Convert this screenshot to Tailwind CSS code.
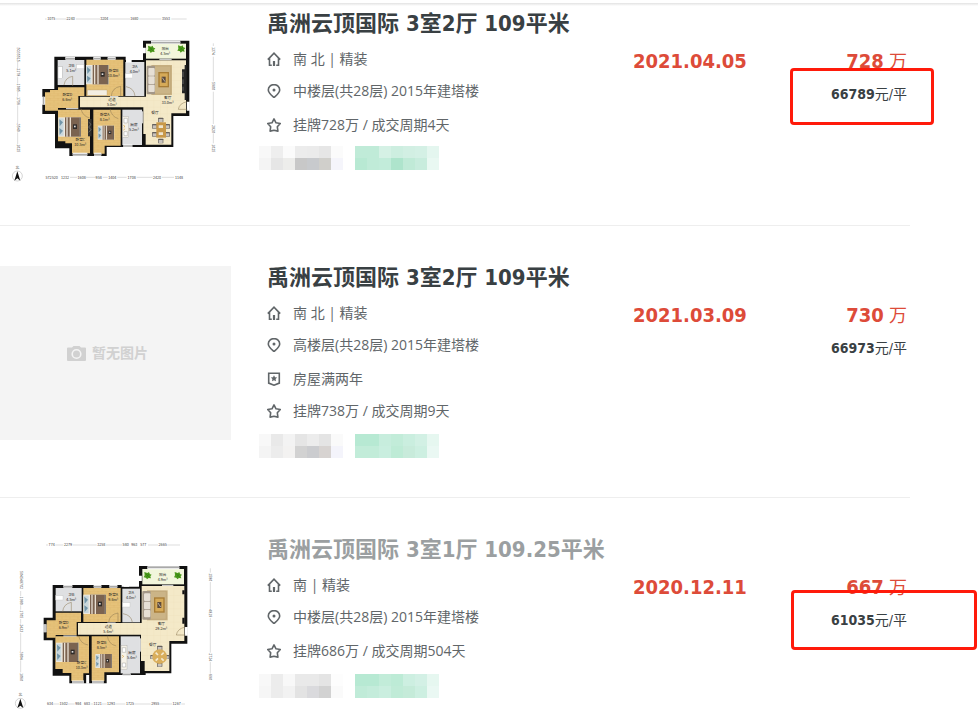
<!DOCTYPE html>
<html lang="zh-CN">
<head>
    <meta charset="UTF-8">
    <meta name="viewport" content="width=device-width, initial-scale=1.0">
    <title>成交房源</title>
    <script src="https://cdn.jsdelivr.net/npm/@tailwindcss/browser@4"></script>
</head>
<body class="bg-white font-['Open_Sans','Noto_Sans_CJK_SC',sans-serif] text-[#616669]">
    <!-- shared drawings -->
    <svg class="absolute size-0" aria-hidden="true">
        <defs>
            <pattern id="wood" width="24" height="14" patternUnits="userSpaceOnUse">
                <rect width="24" height="14" fill="#e6c27a" />
                <path d="M0 .5H24M0 7.5H24M6 0V7M18 7V14" stroke="#d9b063" stroke-width="1" />
            </pattern>
            <pattern id="tile" width="20" height="20" patternUnits="userSpaceOnUse">
                <rect width="20" height="20" fill="#f4e9c8" />
                <path d="M0 .5H20M.5 0V20" stroke="#ecdfb8" stroke-width="1" />
            </pattern>
            <symbol id="bed" viewBox="0 0 68 58" overflow="visible">
                <rect width="68" height="58" fill="#efe9df" />
                <rect x="1" y="3" width="15" height="52" fill="#c9d7dc" />
                <path d="M3 6l11 9-10 12zM3 32l11 8-10 12z" fill="#7295a8" />
                <rect x="20" width="44" height="58" fill="#7b6350" />
                <path d="M26 0V58M36 0V58" stroke="#e8dfd2" stroke-width="4" />
                <rect x="44" y="21" width="12" height="14" fill="#2f2b29" />
                <rect x="47" y="25" width="5" height="5" fill="#ddd" />
                <rect x="64" width="3" height="58" fill="#473c35" />
            </symbol>
            <symbol id="plant" viewBox="0 0 24 24" overflow="visible">
                <path d="M2 1l9 3 5-3 2 6 6 2-4 5 2 6-7-1-5 4-3-5-7-1 3-6z" fill="#4c9a1c" />
                <path d="M6 6l12 11M17 6L7 17" stroke="#2f7a10" stroke-width="2" />
            </symbol>
            <symbol id="lounge" viewBox="0 0 76 90" overflow="visible">
                <rect x="14" y="0" width="62" height="90" fill="#cbb487" />
                <path d="M18 3H72V87H18z" fill="none" stroke="#bda574" stroke-width="2" />
                <rect x="0" y="2" width="25" height="86" rx="3" fill="#a39788" />
                <rect x="5" y="9" width="19" height="23" rx="3" fill="#e6dfd5" />
                <rect x="5" y="34" width="19" height="23" rx="3" fill="#e6dfd5" />
                <rect x="5" y="59" width="19" height="22" rx="3" fill="#e6dfd5" />
                <rect x="35" y="21" width="32" height="46" fill="#a77c36" />
                <rect x="39" y="25" width="24" height="38" fill="#d6aa58" />
                <rect x="45" y="35" width="12" height="18" fill="#5d4a3a" />
                <path d="M47 38l8 12" stroke="#ddd" stroke-width="2" />
            </symbol>
            <symbol id="chair" viewBox="0 0 16 14" overflow="visible">
                <rect width="16" height="14" rx="2" fill="#65605c" />
                <rect x="2" y="4" width="12" height="9" fill="#c8c3bd" />
            </symbol>
            <symbol id="compass" viewBox="0 0 32 32" overflow="visible">
                <circle cx="16" cy="16" r="15" fill="none" stroke="#aaa" stroke-width="1.5" />
                <path d="M16 2l9 28-9-7-9 7z" fill="#111" />
                <text x="16" y="-5" font-size="11" text-anchor="middle" fill="#444">北</text>
            </symbol>
        </defs>
    </svg>

    <header class="h-3 pt-[3px]">
        <div class="h-[3px] bg-linear-to-b from-[#e2e2e2] to-white"></div>
    </header>

    <main id="list"></main>

    <script>
        const pictures = {
            // 109平米 plan
            planA : `
            <svg viewBox="0 36 693 522" class="block w-full" role="img" aria-label="户型图" font-family="Noto Sans CJK SC, sans-serif">
                <path d="M163 170H377V180H429V122H568V348H520V441H320V468H208V445H165V342H127V267H163z" fill="#111"/>
                <rect x="173" y="180" width="80" height="75" fill="#dfe0e2"/>
                <rect x="259" y="179" width="111" height="109" fill="url(#wood)"/>
                <rect x="376" y="186" width="57" height="102" fill="#dfe0e2"/>
                <rect x="438" y="131" width="120" height="45" fill="#f2f6dc"/>
                <path d="M438 181H558V340H514V434H430V322H240V290H438z" fill="url(#tile)"/>
                <path d="M174 262H253V288H235V324H174V332H135V277H150V270H174z" fill="url(#wood)"/>
                <path d="M174 329H270V460H216V430H196V424H174z" fill="url(#wood)"/>
                <path d="M280 329H362V437H314V461H280z" fill="url(#wood)"/>
                <rect x="367" y="329" width="59" height="106" fill="#dfe0e2"/>
                <path d="M426 402H437V436H426z" fill="#111"/>
                <path d="M196 175H225M280 175H302M323 175H347M378 183H395M453 127H541M131 290V314M433 143V160M218 463H262M282 463H304M370 438H397M565 305V332" stroke="#fff" stroke-width="9"/>
                <path d="M196 175H225M280 175H302M323 175H347M453 127H541M131 290V314M218 463H262M282 463H304M370 438H397" stroke="#a9a9a9" stroke-width="4"/>
                <path d="M478 178H515M428 334V370M198 326H235M330 290H355" stroke="#eee" stroke-width="3"/>
                <path d="M218 258V229Q196 232 192 255M362 288V259Q336 263 334 288M405 288Q402 264 378 260M243 326Q247 348 269 354M330 326Q334 350 355 356M562 305Q538 309 535 328H562" stroke="#8b7650" stroke-width="1.5" fill="none"/>
                <use href="#bed" x="258" y="195" width="68" height="58"/>
                <use href="#bed" x="175" y="352" width="68" height="58"/>
                <use href="#bed" x="283" y="377" width="70" height="42"/>
                <rect x="262" y="270" width="59" height="16" fill="#f3eee2" stroke="#b39b6f"/>
                <rect x="264" y="357" width="11" height="52" fill="#30302e"/>
                <path d="M266 366l7 7-7 8 7 8-7 8" stroke="#ccc" fill="none"/>
                <rect x="174" y="200" width="13" height="36" fill="#fff" stroke="#999"/>
                <rect x="230" y="194" width="22" height="12" fill="#fff" stroke="#bbb"/>
                <rect x="376" y="221" width="22" height="13" fill="#fff" stroke="#bbb"/>
                <rect x="368" y="349" width="18" height="63" fill="#f6f2e8" stroke="#999"/>
                <path d="M372 355h10v14h-10zM372 395h10v12h-10z" fill="#fff" stroke="#777"/>
                <path d="M370 376l5 3-4 4M374 386l-3 5" stroke="#d79b31" stroke-width="2" fill="none"/>
                <use href="#lounge" x="440" y="195" width="76" height="90"/>
                <path d="M546 208H558V280H546zM554 195H560V300H554z" fill="#252525"/>
                <path d="M549 215v16M549 238v14M549 260v12" stroke="#888" stroke-width="2"/>
                <use href="#plant" x="442" y="136" width="24" height="24"/>
                <use href="#plant" x="532" y="135" width="24" height="24"/>
                <use href="#chair" x="474" y="353" width="16" height="14"/>
                <use href="#chair" x="456" y="372" width="16" height="14"/>
                <use href="#chair" x="456" y="396" width="16" height="14"/>
                <use href="#chair" x="494" y="372" width="16" height="14"/>
                <use href="#chair" x="494" y="396" width="16" height="14"/>
                <use href="#chair" x="474" y="416" width="16" height="14"/>
                <rect x="469" y="367" width="29" height="46" fill="#c89849"/>
                <path d="M476 376h13v8h-13zM476 397h13v8h-13z" fill="#eee5cf"/>
                <g font-size="11" text-anchor="middle" fill="#222">
                    <text x="214" y="201">卫B</text><text x="214" y="216">5.1m²</text>
                    <text x="341" y="217">卧室B</text><text x="341" y="232">10.8m²</text>
                    <text x="404" y="203">卫A</text><text x="404" y="218">4.0m²</text>
                    <text x="496" y="150">阳台</text><text x="496" y="165">4.5m²</text>
                    <text x="503" y="296">客厅</text><text x="503" y="311">33.0m²</text>
                    <text x="202" y="289">卧室D</text><text x="202" y="304">6.6m²</text>
                    <text x="336" y="303">过道</text><text x="336" y="318">5.0m²</text>
                    <text x="314" y="349">卧室A</text><text x="314" y="364">8.1m²</text>
                    <text x="241" y="422">卧室C</text><text x="241" y="437">10.5m²</text>
                    <text x="402" y="377">厨房</text><text x="402" y="392">5.2m²</text>
                    <text x="465" y="341">餐厅</text>
                </g>
                <g stroke="#999" stroke-width="1">
                    <path d="M135 57H140M168 57H200M228 57H300M328 57H390M418 57H484M514 57H560M210 532H232M258 532H286M308 532H323M352 532H380M410 532H458M486 532H522"/>
                    <path d="M53 185V204M53 230V250M53 276V290M53 316V370M53 397V432M640 130V138M640 170V244M640 275V372M640 400V430"/>
                </g>
                <g font-size="11" text-anchor="middle" fill="#444">
                    <text x="154" y="61">1075</text><text x="212" y="61">2240</text><text x="313" y="61">3204</text><text x="403" y="61">1680</text><text x="498" y="61">3553</text>
                    <text x="155" y="536">572520</text><text x="195" y="536">1232</text><text x="245" y="536">1608</text><text x="296" y="536">958</text><text x="337" y="536">1404</text><text x="395" y="536">1708</text><text x="471" y="536">2420</text><text x="537" y="536">1148</text>
                    <text transform="translate(50 164) rotate(90)">5035515</text><text transform="translate(50 217) rotate(90)">2178</text><text transform="translate(50 263) rotate(90)">1085</text><text transform="translate(50 303) rotate(90)">1756</text><text transform="translate(50 383) rotate(90)">3540</text><text transform="translate(50 445) rotate(90)">1025</text>
                    <text transform="translate(637 153) rotate(90)">1374</text><text transform="translate(637 258) rotate(90)">5900</text><text transform="translate(637 387) rotate(90)">2820</text><text transform="translate(637 445) rotate(90)">1025</text>
                </g>
                <use href="#compass" x="36" y="512" width="32" height="32"/>
            </svg>`,
            // 109.25平米 plan
            planB : `
            <svg viewBox="0 9 693 522" class="block w-full" role="img" aria-label="户型图" font-family="Noto Sans CJK SC, sans-serif">
                <path d="M158 150H365V155H417V93H562V326H514V415H437V420H320V445H208V422H158V316H131V248H158z" fill="#111"/>
                <rect x="167" y="159" width="78" height="70" fill="#dfe0e2"/>
                <rect x="250" y="159" width="112" height="102" fill="url(#wood)"/>
                <rect x="367" y="161" width="53" height="101" fill="#dfe0e2"/>
                <rect x="427" y="102" width="125" height="46" fill="#f2f6dc"/>
                <path d="M425 153H553V318H508V408H423V299H234V264H425z" fill="url(#tile)"/>
                <path d="M167 233H243V261H230V300H167V308H140V256H167z" fill="url(#wood)"/>
                <path d="M166 304H267V415H250V438H214V414H188V402H166z" fill="url(#wood)"/>
                <path d="M275 304H357V412H313V438H275z" fill="url(#wood)"/>
                <rect x="362" y="304" width="58" height="111" fill="#dfe0e2"/>
                <path d="M422 378H434V412H422zM547 248H554V266H547zM547 166H554V178H547z" fill="#111"/>
                <path d="M190 154H217M281 154H304M328 154H352M371 151H387M442 98H538M135 268V292M421 122V138M216 441H252M276 441H311M368 419H392M559 276V302M263 420V446" stroke="#fff" stroke-width="9"/>
                <path d="M190 154H217M281 154H304M328 154H352M442 98H538M135 268V292M216 441H252M276 441H311M368 419H392" stroke="#a9a9a9" stroke-width="4"/>
                <path d="M486 151H520M421 310V350M190 303H230M322 264H347" stroke="#eee" stroke-width="3"/>
                <path d="M214 230V202Q190 207 188 230M354 262V234Q328 238 326 262M397 262Q394 240 369 236M236 302Q240 325 264 330M322 302Q325 328 349 333M556 276Q532 281 529 300H556" stroke="#8b7650" stroke-width="1.5" fill="none"/>
                <use href="#bed" x="250" y="179" width="68" height="58"/>
                <use href="#bed" x="168" y="323" width="68" height="58"/>
                <use href="#bed" x="276" y="357" width="70" height="42"/>
                <rect x="167" y="182" width="22" height="13" fill="#fff" stroke="#bbb"/>
                <rect x="368" y="203" width="22" height="13" fill="#fff" stroke="#bbb"/>
                <rect x="363" y="331" width="18" height="73" fill="#f6f2e8" stroke="#999"/>
                <path d="M367 338h10v14h-10zM367 384h10v12h-10z" fill="#fff" stroke="#777"/>
                <path d="M366 361l5 3-4 4" stroke="#d79b31" stroke-width="2" fill="none"/>
                <use href="#lounge" x="427" y="166" width="76" height="90"/>
                <use href="#plant" x="431" y="110" width="24" height="24"/>
                <use href="#plant" x="522" y="110" width="24" height="24"/>
                <use href="#chair" x="470" y="332" width="18" height="14"/>
                <use href="#chair" x="451" y="357" width="14" height="18"/>
                <use href="#chair" x="494" y="357" width="14" height="18"/>
                <use href="#chair" x="470" y="382" width="18" height="14"/>
                <circle cx="479" cy="365" r="22" fill="#d9ae5c"/>
                <path d="M467 353l7 7M491 353l-7 7M467 377l7-7M491 377l-7-7" stroke="#f4ead0" stroke-width="5"/>
                <g font-size="11" text-anchor="middle" fill="#222">
                    <text x="214" y="182">卫B</text><text x="214" y="197">4.5m²</text>
                    <text x="340" y="182">卧室A</text><text x="340" y="197">9.6m²</text>
                    <text x="393" y="176">卫A</text><text x="393" y="191">4.0m²</text>
                    <text x="488" y="122">阳台</text><text x="488" y="137">4.9m²</text>
                    <text x="484" y="271">客厅</text><text x="484" y="286">29.2m²</text>
                    <text x="191" y="266">卧室D</text><text x="191" y="281">6.9m²</text>
                    <text x="325" y="278">过道</text><text x="325" y="293">5.4m²</text>
                    <text x="305" y="326">卧室B</text><text x="305" y="341">8.5m²</text>
                    <text x="245" y="388">卧室C</text><text x="245" y="403">10.3m²</text>
                    <text x="396" y="356">厨房</text><text x="396" y="371">5.4m²</text>
                    <text x="458" y="333">餐厅</text>
                </g>
                <g stroke="#999" stroke-width="1">
                    <path d="M138 30H144M166 30H190M218 30H290M318 30H366M444 30H474M502 30H540M160 507H178M204 507H224M272 507H280M306 507H320M346 507H376M404 507H452M480 507H516M544 507H555"/>
                    <path d="M62 168V183M62 211V224M62 252V266M62 294V348M62 376V412M631 100V113M631 141V221M631 249V353M631 381V416"/>
                </g>
                <g font-size="11" text-anchor="middle" fill="#444">
                    <text x="155" y="34">774</text><text x="204" y="34">2279</text><text x="304" y="34">3258</text><text x="377" y="34">580</text><text x="403" y="34">963</text><text x="430" y="34">577</text><text x="488" y="34">2665</text>
                    <text x="150" y="511">634</text><text x="191" y="511">1502</text><text x="235" y="511">984</text><text x="261" y="511">683</text><text x="293" y="511">1121</text><text x="333" y="511">1293</text><text x="390" y="511">1725</text><text x="466" y="511">2955</text><text x="530" y="511">1267</text>
                    <text transform="translate(59 135) rotate(90)">504548702</text><text transform="translate(59 197) rotate(90)">1980</text><text transform="translate(59 238) rotate(90)">1705</text><text transform="translate(59 280) rotate(90)">2433</text><text transform="translate(59 362) rotate(90)">3804</text><text transform="translate(59 426) rotate(90)">1060</text>
                    <text transform="translate(628 127) rotate(90)">1580</text><text transform="translate(628 235) rotate(90)">4819</text><text transform="translate(628 367) rotate(90)">2724</text><text transform="translate(628 426) rotate(90)">690</text>
                </g>
                <use href="#compass" x="45" y="489" width="32" height="32"/>
            </svg>`,
            none : `
            <div class="flex h-[174px] items-center justify-center gap-1.5 bg-[#f4f4f4] pr-4 text-sm font-bold text-[#d1d1d1]">
                <svg viewBox="0 0 19 15" class="h-[15px] w-[19px]"><path d="M1 1.500H5L6.500 0H12.500L14 1.500H18Q19 1.500 19 2.500V14Q19 15 18 15H1Q0 15 0 14V2.500Q0 1.500 1 1.500z" fill="currentColor"/><circle cx="9.500" cy="8" r="4.300" fill="none" stroke="#f4f4f4" stroke-width="1.600"/></svg>
                <span>暂无图片</span>
            </div>`
        }

        const icons = {
            home : `<path d="M.8 7.600L7 1.200l6.200 6.400M2.500 6.300v7h2.300M11.500 6.300v7H9.200"/><path d="M7 9v5" stroke-width="2.200"/>`,
            pin : `<path d="M7 13.600C4.500 11.300 1.300 8.700 1.300 5.900a5.700 5.300 0 0 1 11.400 0c0 2.800-3.200 5.400-5.700 7.700z"/><circle cx="7" cy="6" r="1.500" fill="currentColor" stroke="none"/>`,
            badge : `<path d="M1.700 1.300h10.600v9.800L7 13.200 1.700 11.100z"/><path d="M7 3.200l1 2 2.200.3-1.600 1.600.4 2.200L7 8.300l-2 1 .4-2.200-1.600-1.600 2.200-.3z" fill="currentColor" stroke="none"/>`,
            star : `<path d="M7 .9l2 3.900 4.300.7-3 3.200.6 4.400L7 12.200l-3.900.9.6-4.400-3-3.200L5 4.800z" stroke-linejoin="round"/>`
        }

        const houses = [
            {
                picture : 'planA', title : '禹洲云顶国际 3室2厅 109平米', title_color : 'text-[#394043]',
                info : [['home', '南 北 | 精装'], ['pin', '中楼层(共28层) 2015年建塔楼'], ['star', '挂牌728万 / 成交周期4天']],
                date : '2021.04.05', total : '728', unit : '66789',
                mark : 'top-14 -right-6 left-5 h-[57px]', tags_gap : 'mt-[5px]',
                gray : ['#f8f8f8', '#eeeeee', '#fbfbfb', '#ececec', '#ebebeb', '#e6e6e6', '#fbfbfb', '#f4f4f4', '#e6e6e6', '#ededeb', '#c8c8c8', '#c8cacd', '#d0cfcb', '#f5f5fb'],
                green : ['#c0ebd8', '#c0ebd8', '#d5f1e5', '#cdeee0', '#d2efe3', '#d4f0e5', '#e4f6ef', '#b8e9d3', '#c0ebd8', '#c2ecda', '#aee4cc', '#c0ead7', '#c8ecdd', '#e9f8f2']
            },
            {
                picture : 'none', title : '禹洲云顶国际 3室2厅 109平米', title_color : 'text-[#394043]',
                info : [['home', '南 北 | 精装'], ['pin', '高楼层(共28层) 2015年建塔楼'], ['badge', '房屋满两年'], ['star', '挂牌738万 / 成交周期9天']],
                date : '2021.03.09', total : '730', unit : '66973',
                mark : '', tags_gap : 'mt-[7px]',
                gray : ['#f8f8f8', '#e9e9e9', '#f3f3f3', '#e5e5e5', '#ececec', '#e4e4e4', '#fafafa', '#f4f4f4', '#ececec', '#f3f2f1', '#d2d2d2', '#cbcccf', '#d7d3d1', '#f4f4fb'],
                green : ['#b7e9d3', '#b7e9d3', '#c7eddd', '#c2ecd9', '#caeedf', '#d2f0e4', '#e6f7f0', '#c2ecd9', '#c2ecd9', '#c9eedf', '#beebd6', '#c8ebdb', '#cdefe1', '#eaf8f3']
            },
            {
                picture : 'planB', title : '禹洲云顶国际 3室1厅 109.25平米', title_color : 'text-[#9b9fa1]',
                info : [['home', '南 | 精装'], ['pin', '中楼层(共28层) 2015年建塔楼'], ['star', '挂牌686万 / 成交周期504天']],
                date : '2020.12.11', total : '667', unit : '61035',
                mark : 'top-[52px] -right-[67px] left-[21px] h-[60px]', tags_gap : 'mt-[7px]',
                gray : ['#f8f8f8', '#ececec', '#f8f8f8', '#e9e9e9', '#e9e9e9', '#e4e4e4', '#fdfdfd', '#f6f6f6', '#ececec', '#f2f2f2', '#e3e3e3', '#dadadd', '#d2d2d2', '#fafafa'],
                green : ['#b7e9d3', '#b7e9d3', '#c2ecd9', '#bdebd6', '#cdefe1', '#d3f0e5', '#e6f7f0', '#c0ebd8', '#c4ecdb', '#caeedf', '#c0ebd7', '#c5ebd9', '#cdefe1', '#eaf8f3']
            }
        ]

        const render_info = ([icon, text]) => `
            <li class="flex h-8 items-center gap-3 nth-3:mt-0.5">
                <svg viewBox="0 0 14 14" class="size-3.5 shrink-0" fill="none" stroke="currentColor" stroke-width="1.600">${icons[icon]}</svg>
                <span>${text}</span>
            </li>`

        const render_tag = (colors) => `
            <div class="grid grid-cols-7">
                ${colors.map((c) => `<i class="size-3" style="background:${c}"></i>`).join('')}
            </div>`

        const render_house = (h) => `
            <article class="mb-10 grid max-w-[910px] grid-cols-[231px_1fr_137px_140px] border-b border-[#eeeeee] pb-[39px] last:mb-0 last:border-0 last:pb-0">
                <div class="overflow-hidden">${pictures[h.picture]}</div>
                <div class="pl-7">
                    <h2 class="pl-2 font-['DejaVu_Sans_Condensed','Noto_Sans_CJK_SC',sans-serif] text-[22px] leading-6 font-bold whitespace-nowrap ${h.title_color}"><a href="#">${h.title}</a></h2>
                    <ul class="mt-[7px] pl-2 text-sm whitespace-nowrap">${h.info.map(render_info).join('')}</ul>
                    <div class="flex gap-3 ${h.tags_gap}">${render_tag(h.gray)}${render_tag(h.green)}</div>
                </div>
                <div class="pt-[37px] font-['DejaVu_Sans_Condensed','Noto_Sans_CJK_SC',sans-serif] text-xl leading-6 font-bold text-[#dd4b39]">${h.date}</div>
                <div class="relative pt-[37px] pr-[3px] text-right font-['DejaVu_Sans_Condensed','Noto_Sans_CJK_SC',sans-serif]">
                    <p class="text-lg leading-6 text-[#dd4b39]"><b class="text-xl leading-6">${h.total}</b> 万</p>
                    <p class="mt-2 text-sm leading-6 text-[#394043]"><b>${h.unit}</b>元/平</p>
                    ${h.mark ? `<div class="absolute rounded-sm border-3 border-[#ff1a0a] ${h.mark}"></div>` : ''}
                </div>
            </article>`

        document.getElementById('list').innerHTML = houses.map(render_house).join('')
    </script>
</body>
</html>
